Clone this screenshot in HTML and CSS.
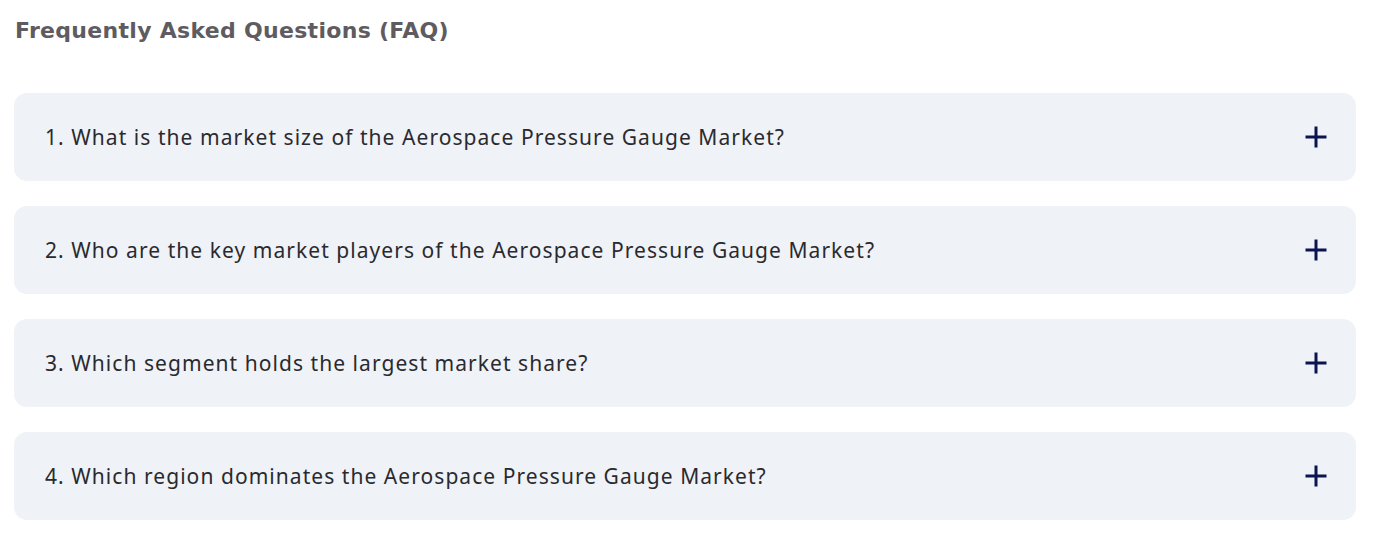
FILE: index.html
```html
<!DOCTYPE html>
<html lang="en">
<head>
<meta charset="utf-8">
<title>FAQ</title>
<link rel="stylesheet" href="styles.css">
</head>
<body>
<section class="faq">
  <h2 class="faq-title">Frequently Asked Questions (FAQ)</h2>
  <div class="faq-list">
    <div class="faq-item"><span class="faq-q">1. What is the market size of the Aerospace Pressure Gauge Market?</span><span class="faq-plus"><svg width="22" height="22" viewBox="0 0 22 22"><path d="M11 0.5v21M0.5 11h21" stroke="#0b1450" stroke-width="3" fill="none"/></svg></span></div>
    <div class="faq-item"><span class="faq-q">2. Who are the key market players of the Aerospace Pressure Gauge Market?</span><span class="faq-plus"><svg width="22" height="22" viewBox="0 0 22 22"><path d="M11 0.5v21M0.5 11h21" stroke="#0b1450" stroke-width="3" fill="none"/></svg></span></div>
    <div class="faq-item"><span class="faq-q">3. Which segment holds the largest market share?</span><span class="faq-plus"><svg width="22" height="22" viewBox="0 0 22 22"><path d="M11 0.5v21M0.5 11h21" stroke="#0b1450" stroke-width="3" fill="none"/></svg></span></div>
    <div class="faq-item"><span class="faq-q">4. Which region dominates the Aerospace Pressure Gauge Market?</span><span class="faq-plus"><svg width="22" height="22" viewBox="0 0 22 22"><path d="M11 0.5v21M0.5 11h21" stroke="#0b1450" stroke-width="3" fill="none"/></svg></span></div>
  </div>
</section>
</body>
</html>
```
FILE: styles.css
```css
html, body { margin: 0; padding: 0; background: #fff; }
.faq { padding: 15px 22px 0 14px; }
.faq-title {
  margin: 0 0 0 1px;
  font-family: "DejaVu Sans", sans-serif;
  font-weight: 700;
  font-size: 22px;
  letter-spacing: 0.3px;
  line-height: 32px;
  color: #5e5b61;
}
.faq-list {
  margin-top: 46px;
  display: flex;
  flex-direction: column;
  gap: 25px;
}
.faq-item {
  height: 88px;
  box-sizing: border-box;
  background: #eff2f7;
  border-radius: 13px;
  padding: 0 29px 0 31px;
  display: flex;
  align-items: center;
  justify-content: space-between;
}
.faq-q {
  font-family: "Noto Sans", sans-serif;
  font-size: 21px;
  letter-spacing: 1.05px;
  color: #2a2a2e;
}
.faq-plus { display: flex; }
```
